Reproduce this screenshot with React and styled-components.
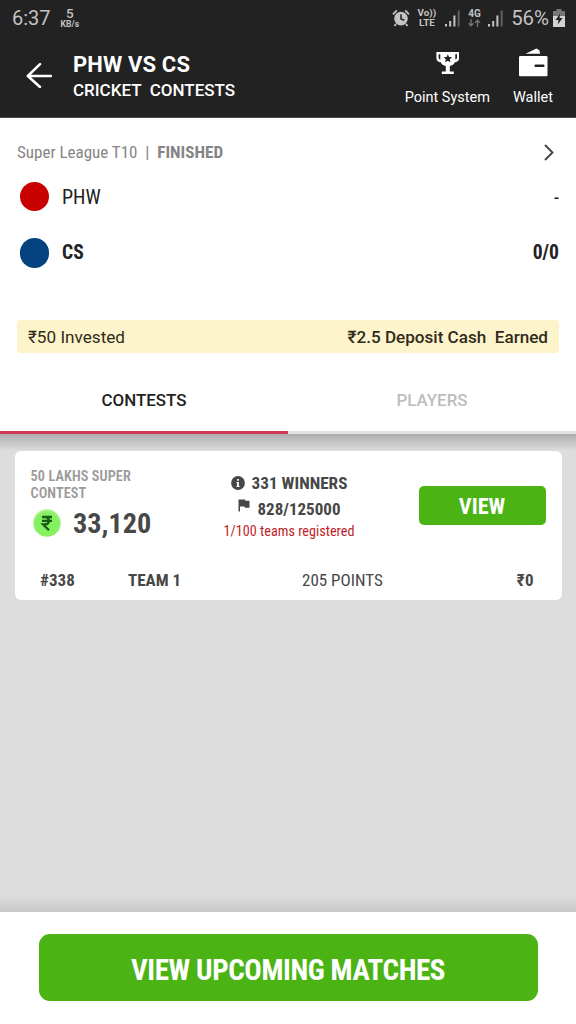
import React from "react";
import styled, { createGlobalStyle } from "styled-components";

const GlobalStyle = createGlobalStyle`
  * { box-sizing: border-box; }
  body { margin: 0; background: #fff; font-family: Roboto, "Noto Sans", sans-serif; }
  button { font-family: inherit; border: 0; padding: 0; background: none; color: inherit; }
`;

const Screen = styled.div`
  width: 576px;
  height: 1024px;
  display: flex;
  flex-direction: column;
  overflow: hidden;
  background: #fff;
`;

const Label = styled.span`
  display: block;
  white-space: pre;
  font-size: ${(p) => p.$size}px;
  font-weight: ${(p) => p.$weight || 400};
  line-height: ${(p) => p.$line || 24}px;
  letter-spacing: ${(p) => p.$track || 0}px;
  color: ${(p) => p.$color || "inherit"};
`;

const Narrow = styled(Label)`
  font-family: "Roboto Condensed", Roboto, "Noto Sans", sans-serif;
  font-stretch: 75%;
`;

const Top = styled.header`
  height: 118px;
  background: #222;
  color: #fff;
  display: flex;
  flex-direction: column;
  border-bottom: 1px solid #4a4a4a;
`;

const StatusBar = styled.div`
  height: 36px;
  padding: 0 11px 0 12px;
  display: flex;
  align-items: center;
  justify-content: space-between;
  color: #c3c3c3;
`;

const StatusGroup = styled.div`
  display: flex;
  align-items: center;
  gap: ${(p) => p.$gap}px;
`;

const Stack = styled.div`
  display: flex;
  flex-direction: column;
  align-items: center;
  margin-bottom: ${(p) => p.$raise || 0}px;
`;

const AppBar = styled.div`
  flex: 1;
  padding: 0 23px 0 26px;
  display: flex;
`;

const BackButton = styled.button`
  width: 26px;
  height: 26px;
  margin: 26px 21px 0 0;
  color: #fff;
`;

const Titles = styled.div`
  flex: 1;
  padding-top: 15px;
`;

const Action = styled.button`
  height: 72px;
  display: flex;
  flex-direction: column;
  align-items: center;
  margin-left: ${(p) => p.$gap || 0}px;
  padding-top: 11px;
  svg { display: block; height: 32px; flex: none; }
`;

const Match = styled.section`
  height: 250px;
  padding: 20px 17px 0;
  display: flex;
  flex-direction: column;
`;

const LeagueRow = styled.div`
  height: 28px;
  display: flex;
  align-items: center;
  color: #858585;
  svg { margin-left: auto; margin-right: 5px; }
`;

const TeamRow = styled.div`
  height: 30px;
  margin-top: ${(p) => p.$top}px;
  display: flex;
  align-items: center;
  justify-content: space-between;
  color: #222;
`;

const Team = styled.div`
  display: flex;
  align-items: center;
  gap: 13px;
  padding-left: 2.5px;
`;

const Crest = styled.i`
  width: 29.5px;
  height: 29.5px;
  border-radius: 50%;
  background: ${(p) => p.$color};
`;

const Banner = styled.div`
  height: 33px;
  margin-top: 52px;
  padding: 0 11px;
  border-radius: 4px;
  background: #fdf4cb;
  color: #2f2b1a;
  display: flex;
  align-items: center;
  justify-content: space-between;
`;

const Tabs = styled.nav`
  height: 66px;
  display: flex;
`;

const Tab = styled.button`
  flex: 1;
  padding-top: 1px;
  display: flex;
  align-items: center;
  justify-content: center;
  color: ${(p) => (p.$active ? "#222" : "#bdbdbd")};
  border-bottom: 3px solid ${(p) => (p.$active ? "#cd3957" : "#e3e3e3")};
`;

const Content = styled.main`
  flex: 1;
  padding: 16.5px 14.5px 0;
  background:
    linear-gradient(#adadad, #c4c4c4 45%, #dddddd) 0 0 / 100% 17px no-repeat,
    linear-gradient(#dddddd, #c8c8c8) 0 100% / 100% 17px no-repeat,
    #ddd;
`;

const Card = styled.article`
  height: 149px;
  border-radius: 6px;
  background: #fff;
  color: #474747;
`;

const CardBody = styled.div`
  height: 110px;
  display: flex;
`;

const Prize = styled.div`
  width: 192px;
  padding: 17.5px 0 0 16px;
`;

const PrizeAmount = styled.div`
  display: flex;
  align-items: center;
  gap: 12px;
  margin-top: 5px;
  padding-left: 2.5px;
  svg { margin-top: -2px; }
`;

const Entry = styled.div`
  width: 165px;
  padding-top: 19.5px;
  display: flex;
  flex-direction: column;
  align-items: center;
`;

const EntryLine = styled.div`
  height: 26px;
  display: flex;
  align-items: center;
  gap: ${(p) => p.$gap}px;
  svg { position: relative; top: ${(p) => p.$lift || 0}px; }
`;

const ViewButton = styled.button`
  width: 127px;
  height: 39px;
  margin: 35.5px 16px 0 auto;
  padding-top: 1px;
  border-radius: 5px;
  background: #4bb414;
  color: #fff;
  display: flex;
  align-items: center;
  justify-content: center;
`;

const Result = styled.div`
  height: 39px;
  padding: 0 28px 0 25.5px;
  display: grid;
  grid-template-columns: 88px 174px 1fr auto;
  align-items: center;
`;

const Footer = styled.footer`
  height: 112px;
  padding: 22px 38.5px 0;
  background: #fff;
`;

const Upcoming = styled.button`
  width: 100%;
  height: 67px;
  padding-top: 4px;
  border-radius: 11px;
  background: #4bb414;
  color: #fff;
  display: flex;
  align-items: center;
  justify-content: center;
`;

const Signal = () => (
  <svg width="15" height="17" viewBox="0 0 15 17" fill="currentColor">
    <rect x="0" y="14" width="2" height="2.5" />
    <rect x="4.2" y="11" width="2" height="5.5" />
    <rect x="8.4" y="5.5" width="2" height="11" />
    <rect x="12.7" y="0.5" width="1.9" height="16" opacity=".4" />
  </svg>
);

const Alarm = () => (
  <svg width="18" height="18" viewBox="0 0 18 18" fill="none" stroke="currentColor">
    <circle cx="9" cy="9.6" r="6.8" fill="currentColor" stroke="none" />
    <path d="M1 5.3 4.8 1.3M17 5.3 13.2 1.3M4 15l-1.5 2M14 15l1.5 2" strokeWidth="1.8" />
    <path d="M9 5.2v4.7l3.4 1.3" stroke="#222" strokeWidth="1.5" />
  </svg>
);

const Arrows = () => (
  <svg width="13" height="8" viewBox="0 0 13 8" fill="none" stroke="#777" strokeWidth="1.3">
    <path d="M3 0v6.5M.6 4.2 3 6.8l2.4-2.6M9.5 8V1.2M7.1 3.7l2.4-2.6 2.4 2.6" />
  </svg>
);

const Battery = () => (
  <svg width="12" height="18" viewBox="0 0 12 18">
    <path d="M3.5 0h5v2H12v16H0V2h3.5z" fill="#777" />
    <path d="M0 7h12v11H0z" fill="#d2d2d2" />
    <path d="M7.2 4.5 2.5 11h3L4.7 15.5 9.6 9H6.5z" fill="#222" />
  </svg>
);

const Trophy = () => (
  <svg width="24" height="32" viewBox="-0.8 0 24 32">
    <path d="M.6 5h22.8v6.2c0 2.4-1.6 3.8-4.400 4-.8 2-2.600 3.400-5 3.800v5.400h4V27H6v-2.600h4V19c-2.400-.4-4.200-1.800-5-3.800-2.800-.2-4.400-1.600-4.400-4z" fill="#fff" />
    <path d="M2.800 7.200h1.700v5.400c-1.100-.2-1.700-.9-1.700-2zM21.200 7.200h-1.700v5.400c1.100-.2 1.700-.9 1.700-2z" fill="#222" />
    <path d="m12 7.200 1.250 2.750 3 .3-2.250 2 .65 2.950L12 13.650 9.350 15.200l.65-2.950-2.250-2 3-.3z" fill="#222" />
  </svg>
);

const Wallet = () => (
  <svg width="30" height="32" viewBox="0 0 30 32">
    <path d="M7.5 6.8 18.5 1.5l2.8 1.8.9 3.5z" fill="#fff" />
    <rect x="1" y="9" width="28.5" height="20.3" rx="1.3" fill="#fff" />
    <rect x="16.5" y="17.5" width="10" height="2.6" rx="1.2" fill="#222" />
  </svg>
);

const Info = () => (
  <svg width="14" height="14" viewBox="0 0 14 14">
    <circle cx="7" cy="7" r="6.9" fill="currentColor" />
    <path d="M6.100 3h1.800v1.700H6.100zM5.500 5.900h2.400v4h.7V11H5.400V9.900h.7V7h-.6z" fill="#fff" />
  </svg>
);

const Flag = () => (
  <svg width="12" height="13" viewBox="0 0 12 13" fill="currentColor">
    <path d="M.5.500h6.600l.3 1.300h4.100v7H6.900l-.3-1.300H2v5H.5z" />
  </svg>
);

const Coin = () => (
  <svg width="28" height="28" viewBox="0 0 28 28">
    <defs>
      <radialGradient id="coin" cx="50%" cy="55%" r="55%">
        <stop offset="0" stopColor="#7df558" />
        <stop offset=".78" stopColor="#88ef62" />
        <stop offset="1" stopColor="#b5f59b" />
      </radialGradient>
    </defs>
    <circle cx="14" cy="14" r="13.8" fill="url(#coin)" />
    <path d="M9 8h10M9 11.800h10M9 8h3.200c4.800 0 4.800 7.300 0 7.300H10l6 6" fill="none" stroke="#175a16" strokeWidth="2.3" />
  </svg>
);

export default function App() {
  return (
    <Screen>
      <GlobalStyle />
      <Top>
        <StatusBar>
          <StatusGroup $gap={10}>
            <Label $size={20}>6:37</Label>
            <Stack $raise={2}>
              <Label $size={13.5} $weight={500} $line={14}>5</Label>
              <Label $size={8.6} $weight={700} $line={8}>KB/s</Label>
            </Stack>
          </StatusGroup>
          <StatusGroup $gap={8}>
            <Alarm />
            <StatusGroup $gap={9}>
              <Stack $raise={1}>
                <Label $size={9.8} $weight={700} $line={10}>Vo))</Label>
                <Label $size={9.8} $weight={700} $line={9}>LTE</Label>
              </Stack>
              <Signal />
            </StatusGroup>
            <StatusGroup $gap={7}>
              <Stack>
                <Label $size={10} $weight={700} $line={10}>4G</Label>
                <Arrows />
              </Stack>
              <Signal />
            </StatusGroup>
            <StatusGroup $gap={4}>
              <Label $size={20.4}>56%</Label>
              <Battery />
            </StatusGroup>
          </StatusGroup>
        </StatusBar>
        <AppBar>
          <BackButton aria-label="Back">
            <svg width="26" height="26" viewBox="0 0 26 26" fill="none" stroke="currentColor" strokeWidth="2.5" strokeLinecap="round" strokeLinejoin="round">
              <path d="M25 14H1.8M14 2.2 1.8 14 14 25" />
            </svg>
          </BackButton>
          <Titles>
            <Label $size={22} $weight={700} $line={27} $track={0.15}>PHW VS CS</Label>
            <Label $size={17} $weight={500} $line={25}>CRICKET  CONTESTS</Label>
          </Titles>
          <Action>
            <Trophy />
            <Label $size={14.5} $line={37}>Point System</Label>
          </Action>
          <Action $gap={23}>
            <Wallet />
            <Label $size={14.5} $line={37}>Wallet</Label>
          </Action>
        </AppBar>
      </Top>

      <Match>
        <LeagueRow>
          <Narrow $size={17}>Super League T10  |  </Narrow>
          <Narrow $size={17.2} $weight={700}>FINISHED</Narrow>
          <svg width="10" height="17" viewBox="0 0 10 17" fill="none" stroke="#444" strokeWidth="1.9">
            <path d="m1 1 7.5 7.5L1 16" />
          </svg>
        </LeagueRow>
        <TeamRow $top={15.5}>
          <Team>
            <Crest $color="#c90000" />
            <Narrow $size={20}>PHW</Narrow>
          </Team>
          <Narrow $size={20}>-</Narrow>
        </TeamRow>
        <TeamRow $top={26.5}>
          <Team>
            <Crest $color="#04417f" />
            <Narrow $size={19.6} $weight={700}>CS</Narrow>
          </Team>
          <Narrow $size={19.6} $weight={700}>0/0</Narrow>
        </TeamRow>
        <Banner>
          <Label $size={17.15}>₹50 Invested</Label>
          <Label $size={17.1} $weight={500}>₹2.5 Deposit Cash  Earned</Label>
        </Banner>
      </Match>

      <Tabs>
        <Tab $active>
          <Label $size={16.9} $weight={500}>CONTESTS</Label>
        </Tab>
        <Tab>
          <Label $size={16.9} $weight={500}>PLAYERS</Label>
        </Tab>
      </Tabs>

      <Content>
        <Card>
          <CardBody>
            <Prize>
              <Narrow $size={14.2} $weight={600} $line={17} $track={0.12} $color="#9a9a9a">{"50 LAKHS SUPER\nCONTEST"}</Narrow>
              <PrizeAmount>
                <Coin />
                <Narrow $size={28.2} $weight={700} $line={34}>33,120</Narrow>
              </PrizeAmount>
            </Prize>
            <Entry>
              <EntryLine $gap={7}>
                <Info />
                <Narrow $size={17.2} $weight={700}>331 WINNERS</Narrow>
              </EntryLine>
              <EntryLine $gap={8} $lift={-4}>
                <Flag />
                <Narrow $size={17} $weight={700}>828/125000</Narrow>
              </EntryLine>
              <Narrow $size={14.2} $line={18} $color="#c01d28">1/100 teams registered</Narrow>
            </Entry>
            <ViewButton>
              <Narrow $size={22.2} $weight={700}>VIEW</Narrow>
            </ViewButton>
          </CardBody>
          <Result>
            <Narrow $size={17} $weight={700}>#338</Narrow>
            <Narrow $size={17} $weight={700}>TEAM 1</Narrow>
            <Narrow $size={17}>205 POINTS</Narrow>
            <Narrow $size={17} $weight={700}>₹0</Narrow>
          </Result>
        </Card>
      </Content>

      <Footer>
        <Upcoming>
          <Narrow $size={29} $weight={700} $line={36} $track={-0.42}>VIEW UPCOMING MATCHES</Narrow>
        </Upcoming>
      </Footer>
    </Screen>
  );
}
